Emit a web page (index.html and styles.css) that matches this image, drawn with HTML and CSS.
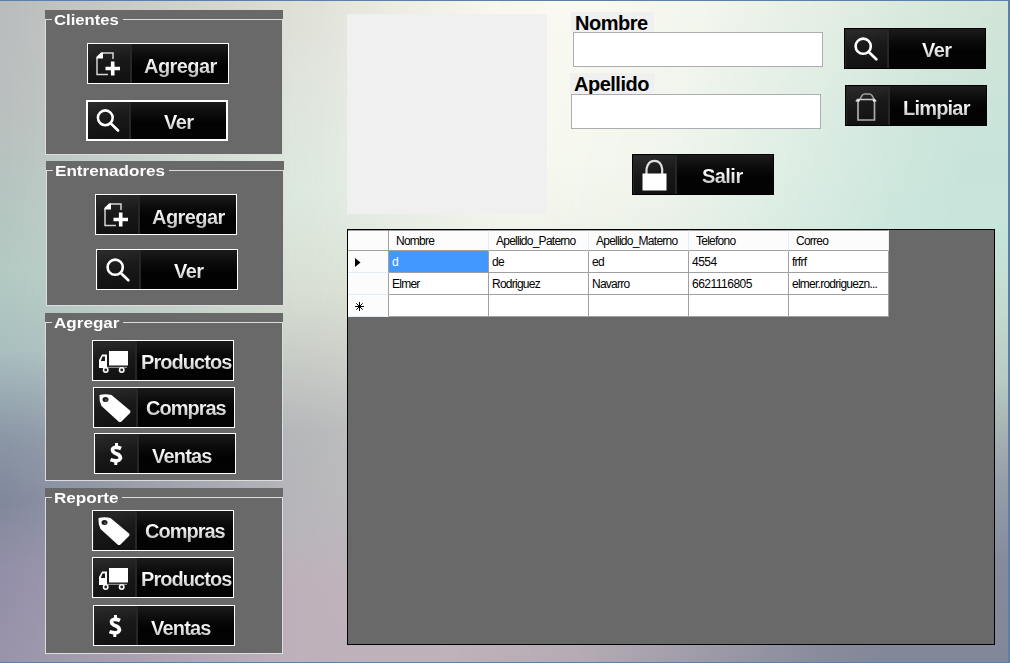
FILE: index.html
```html
<!DOCTYPE html>
<html lang="es">
<head>
<meta charset="utf-8">
<title>Clientes</title>
<link rel="stylesheet" href="styles.css">
</head>
<body>
<svg class="defs" width="0" height="0" aria-hidden="true">
  <symbol id="add" viewBox="2 1 41 38">
    <path d="M14.500 9H26V15M10 14V30.500H21" fill="none" stroke="#d4d4d4" stroke-width="1.500"/>
    <path d="M9.300 14.500V13L14 8.500H16V14.500Z" fill="#fff"/>
    <path d="M25.700 17.500V31.500M18.500 24.500H33" fill="none" stroke="#fff" stroke-width="3.600"/>
  </symbol>
  <symbol id="search" viewBox="1 1 41 38">
    <circle cx="18.200" cy="17.200" r="7.600" fill="none" stroke="#fff" stroke-width="2.600"/>
    <path d="M23.800 23L31.300 30.300" stroke="#fff" stroke-width="2.700" stroke-linecap="round"/>
  </symbol>
  <symbol id="truck" viewBox="1 1 41 38">
    <path d="M16 10H35V24.500H16ZM6 27V19L9 13.500H14V27Z" fill="#fff"/>
    <path d="M9.500 15.500H12V20H7.800Z" fill="#181818"/>
    <path d="M14 26.300H34" stroke="#aaa" stroke-width="1"/>
    <circle cx="12.700" cy="29" r="2.200" fill="#222" stroke="#fff" stroke-width="1.600"/>
    <circle cx="28.700" cy="29" r="2.200" fill="#222" stroke="#fff" stroke-width="1.600"/>
  </symbol>
  <symbol id="tag" viewBox="1.500 1 41 38">
    <path d="M6 7Q12 5.500 18 7L36.500 22.500Q37.500 24 36.500 25L28 33.500Q26.500 34.500 25 33.500L8 18Q5.500 13 6 7Z" fill="#fff"/>
    <ellipse cx="12" cy="11.500" rx="3" ry="2.500" fill="#181818"/>
    <circle cx="12.700" cy="12" r="1.500" fill="#444"/>
  </symbol>
  <symbol id="dollar" viewBox="1 1 41 38">
    <path d="M26 14.500Q22.500 12.800 19.500 13.500T18 17.500Q19 19 22 20T25.500 24Q24.500 26.800 21.500 26.800T15.500 25.600" fill="none" stroke="#fff" stroke-width="3.700"/>
    <path d="M21.500 9V13M20.800 27V31" stroke="#fff" stroke-width="3"/>
  </symbol>
  <symbol id="trash" viewBox="1.500 1 41 38">
    <path d="M14.500 13.500Q16.500 8 19 8H24Q26.500 8 28.500 13.500" fill="none" stroke="#a0a0a0" stroke-width="1.700"/>
    <path d="M10.500 15.500L12 13.500H29L30.500 15.500" fill="none" stroke="#c9c9c9" stroke-width="1.700"/>
    <path d="M12.500 15V34H29V15" fill="none" stroke="#adadad" stroke-width="1.700"/>
    <circle cx="13" cy="14.500" r="1.300" fill="#eee"/><circle cx="28.500" cy="14.500" r="1.300" fill="#eee"/>
  </symbol>
  <symbol id="lock" viewBox="1 1 41 38">
    <path d="M13.500 19V14Q15 5.800 21.500 5.800T29.200 14V19" fill="none" stroke="#dedede" stroke-width="2.200"/>
    <path d="M9.500 18.500H33.500V35.500H9.500Z" fill="#fff"/>
  </symbol>
</svg>
<div class="window">
  <div class="backdrop edge-left"></div>
  <div class="backdrop middle"></div>
  <div class="backdrop center"></div>
  <div class="backdrop edge-right"></div>
  <main class="content">
    <aside class="sidebar">
      <section class="panel clientes"><div class="frame">
        <h2><span>Clientes</span></h2>
        <button class="btn b1"><svg><use href="#add"/></svg><span class="agregar">Agregar</span></button>
        <button class="btn b2 focused"><svg><use href="#search"/></svg><span class="ver">Ver</span></button>
      </div></section>
      <section class="panel entrenadores"><div class="frame">
        <h2><span>Entrenadores</span></h2>
        <button class="btn b1"><svg><use href="#add"/></svg><span class="agregar">Agregar</span></button>
        <button class="btn b2"><svg><use href="#search"/></svg><span class="ver">Ver</span></button>
      </div></section>
      <section class="panel agregar-panel"><div class="frame">
        <h2><span>Agregar</span></h2>
        <button class="btn b1"><svg><use href="#truck"/></svg><span class="productos">Productos</span></button>
        <button class="btn b2"><svg><use href="#tag"/></svg><span class="compras">Compras</span></button>
        <button class="btn b3"><svg><use href="#dollar"/></svg><span class="ventas">Ventas</span></button>
      </div></section>
      <section class="panel reporte"><div class="frame">
        <h2><span>Reporte</span></h2>
        <button class="btn b1"><svg><use href="#tag"/></svg><span class="compras">Compras</span></button>
        <button class="btn b2"><svg><use href="#truck"/></svg><span class="productos">Productos</span></button>
        <button class="btn b3"><svg><use href="#dollar"/></svg><span class="ventas">Ventas</span></button>
      </div></section>
    </aside>
    <section class="work">
      <div class="top">
        <div class="photo"></div>
        <form class="fields">
          <label class="nombre" for="nombre">Nombre</label>
          <input class="in-nombre" id="nombre">
          <label class="apellido" for="apellido">Apellido</label>
          <input class="in-apellido" id="apellido">
          <button type="button" class="btn dark salir-btn"><svg><use href="#lock"/></svg><span class="salir">Salir</span></button>
        </form>
        <div class="actions">
          <button class="btn dark ver-btn"><svg><use href="#search"/></svg><span class="ver">Ver</span></button>
          <button class="btn dark limpiar-btn"><svg><use href="#trash"/></svg><span class="limpiar">Limpiar</span></button>
        </div>
      </div>
      <div class="datagrid">
        <table>
          <colgroup><col class="rowhead"><col><col><col><col><col></colgroup>
          <thead><tr><th></th><th>Nombre</th><th>Apellido_Paterno</th><th>Apellido_Materno</th><th>Telefono</th><th>Correo</th></tr></thead>
          <tbody>
            <tr><th><svg width="6" height="9" viewBox="0 0 6 9"><path d="M0 0L5.500 4.500L0 9Z"/></svg></th><td class="selected">d</td><td>de</td><td>ed</td><td class="num">4554</td><td>frfrf</td></tr>
            <tr><th></th><td>Elmer</td><td>Rodriguez</td><td>Navarro</td><td class="num">6621116805</td><td>elmer.rodriguezn...</td></tr>
            <tr><th><svg width="9" height="9" viewBox="0 0 9 9"><path d="M4.500 0V9M0 4.500H9M1.300 1.300L7.700 7.700M7.700 1.300L1.300 7.700" stroke="#000" stroke-width="1"/></svg></th><td></td><td></td><td></td><td></td><td></td></tr>
          </tbody>
        </table>
      </div>
    </section>
  </main>
</div>
</body>
</html>
```

FILE: styles.css
```css
* { box-sizing: border-box; }
body { margin: 0; font-family: "Liberation Sans", Arial, sans-serif; }
.defs { display: block; height: 0; }

.window {
  display: grid;
  width: 1010px;
  height: 663px;
  overflow: hidden;
  border: solid #5b80aa;
  border-width: 1px 2px 1px 0;
}
.backdrop, .content { grid-area: 1 / 1; }
.edge-left { background: linear-gradient(#b9bcbd 0, #b9bfbe 110px, #b3cac3 270px, #a9bfc0 350px, #8a95a5 440px, #81889d 500px, #938fa9 570px, #9a94ab 663px); }
.middle {
  background: linear-gradient(#dfdfd6 0, #dfe4dc 80px, #dde9df 190px, #d8dfd2 290px, #c8ccc6 360px, #b6b8ba 430px, #b8b6bb 520px, #bfb1bb 590px, #beb1bb 663px);
  -webkit-mask-image: linear-gradient(90deg, transparent 0, #000 300px);
  mask-image: linear-gradient(90deg, transparent 0, #000 300px);
}
.center {
  background: linear-gradient(#fafaf2 0, #f8f9f0 160px, #f3f5ec 220px, #d0d0cc 400px, #beb1b9 663px);
  -webkit-mask-image: linear-gradient(90deg, transparent 300px, rgba(0,0,0,.5) 400px, rgba(0,0,0,.9) 500px, #000 600px);
  mask-image: linear-gradient(90deg, transparent 300px, rgba(0,0,0,.5) 400px, rgba(0,0,0,.9) 500px, #000 600px);
}
.edge-right {
  background: linear-gradient(#d3e5d8 0, #c9e4da 130px, #c7e5db 220px, #c3dcd1 300px, #b8cbc4 380px, #a6b3b4 430px, #969fa9 480px, #858b9d 560px, #828799 663px);
  -webkit-mask-image: linear-gradient(100deg, transparent 560px, rgba(0,0,0,.15) 680px, rgba(0,0,0,.55) 810px, rgba(0,0,0,.9) 920px, #000 980px);
  mask-image: linear-gradient(100deg, transparent 560px, rgba(0,0,0,.15) 680px, rgba(0,0,0,.55) 810px, rgba(0,0,0,.9) 920px, #000 980px);
}

.content { display: flex; position: relative; }
.sidebar { width: 347px; padding: 9px 0 0 45px; }

.panel { width: 238px; padding-top: 9px; background: #696969; }
.clientes { height: 145px; }
.entrenadores { height: 145px; margin: 6px 0 0 1px; }
.agregar-panel { height: 168px; margin-top: 7px; }
.reporte { height: 166px; margin-top: 7px; }
.frame { height: 100%; border: 1px solid #dcdcdc; display: flex; flex-direction: column; align-items: flex-start; }
h2 {
  flex: none;
  height: 18px;
  margin: -9px 0 0 6px;
  padding-left: 2px;
  background: #696969;
  color: #fff;
  font-size: 14px;
  line-height: 19px;
}
h2 span { display: inline-block; transform: scaleX(1.22); transform-origin: 0 0; }
.clientes h2 { width: 71px; }
.clientes h2 span { transform: scaleX(1.19); }
.entrenadores h2 { width: 116px; }
.agregar-panel h2 { width: 71px; }
.reporte h2 { width: 70px; }

.btn {
  display: flex;
  align-items: stretch;
  flex: none;
  width: 142px;
  height: 41px;
  margin: 0;
  padding: 0;
  border: 1px solid #fff;
  background: linear-gradient(#1b1b1b, #0a0a0a 35%, #020202 60%, #040404);
  font: bold 20px "Liberation Sans", Arial, sans-serif;
  letter-spacing: -.55px;
}
.btn.dark { border-color: #000; }
.btn.focused { border-width: 2px; }
.btn svg {
  width: 44px;
  height: 39px;
  flex: none;
  border: solid #262626;
  border-width: 1px 2px 0 1px;
  background: linear-gradient(170deg, #2c2c2c, #191919 45%, #101010);
}
.btn.focused svg { width: 43px; height: 37px; border-width: 0 2px 0 0; }
.btn span {
  align-self: center;
  flex: none;
  height: 24px;
  margin-top: 4px;
  padding-right: 2px;
  line-height: 24px;
  color: transparent;
  background: linear-gradient(#fff 30%, #bcbcbc 90%);
  -webkit-background-clip: text;
  background-clip: text;
}
.btn .agregar { margin-left: 12px; }
.btn .ver { margin: 2px 0 0 33px; }
.btn .productos { margin: 2px 0 0 4px; letter-spacing: -.95px; }
.btn .compras { margin: 0 0 0 8px; letter-spacing: -1px; }
.btn .ventas { margin-left: 13px; letter-spacing: -.8px; }
.btn .limpiar { margin-left: 13px; letter-spacing: -.8px; }
.btn .salir { margin: 2px 0 0 25px; }

.clientes .b1 { margin: 14px 0 0 41px; }
.clientes .b2 { margin: 16px 0 0 40px; }
.entrenadores .b1 { margin: 14px 0 0 48px; }
.entrenadores .b2 { margin: 14px 0 0 49px; }
.agregar-panel .b1 { margin: 8px 0 0 46px; }
.agregar-panel .b2 { margin: 6px 0 0 47px; }
.agregar-panel .b3 { margin: 5px 0 0 48px; }
.reporte .b1 { margin: 3px 0 0 46px; }
.reporte .b2 { margin: 6px 0 0 46px; }
.reporte .b3 { margin: 7px 0 0 47px; }

.work { width: 648px; }
.top { display: flex; height: 228px; }
.photo { width: 200px; height: 200px; margin-top: 13px; background: #f0f0f0; }
.fields { display: flex; flex-direction: column; align-items: flex-start; width: 276px; margin-left: 23px; padding-top: 11px; }
label { background: #f0f0f0; color: #000; font-size: 20px; font-weight: bold; line-height: 23px; padding-left: 4px; letter-spacing: -.5px; }
label.nombre { width: 83px; height: 20px; margin-left: 1px; }
label.apellido { width: 85px; height: 21px; margin-top: 6px; }
input { width: 250px; height: 35px; border: 1px solid #abadb3; background: #fff; outline: 0; }
.in-nombre { margin-left: 3px; }
.in-apellido { margin-left: 1px; }
.salir-btn { margin: 25px 0 0 62px; }
.actions { padding-top: 27px; margin-left: -2px; }
.limpiar-btn { margin: 16px 0 0 1px; }

.datagrid { height: 416px; border: 1px solid #000; background: #696969; }
table { width: 541px; table-layout: fixed; border-collapse: separate; border-spacing: 0; font-size: 12px; letter-spacing: -.75px; color: #000; }
col { width: 100px; }
col.rowhead { width: 41px; }
th, td { height: 22px; padding: 1px 0 0 3px; border: solid #a0a0a0; border-width: 0 1px 1px 0; background: #fff; text-align: left; font-weight: normal; line-height: 13px; white-space: nowrap; overflow: hidden; }
th { background: #fcfcfc; }
thead th { height: 21px; padding-left: 7px; border-top: 1px solid #a0a0a0; border-right-color: #e3ecfa; }
thead th:first-child { border-right-color: #a0a0a0; }
tbody th { padding: 2px 0 0 7px; border-bottom-color: #e3ecfa; }
tbody th svg { display: block; }
td.selected { background: #4398ff; color: #fff; }
.num { letter-spacing: -.5px; }
```
